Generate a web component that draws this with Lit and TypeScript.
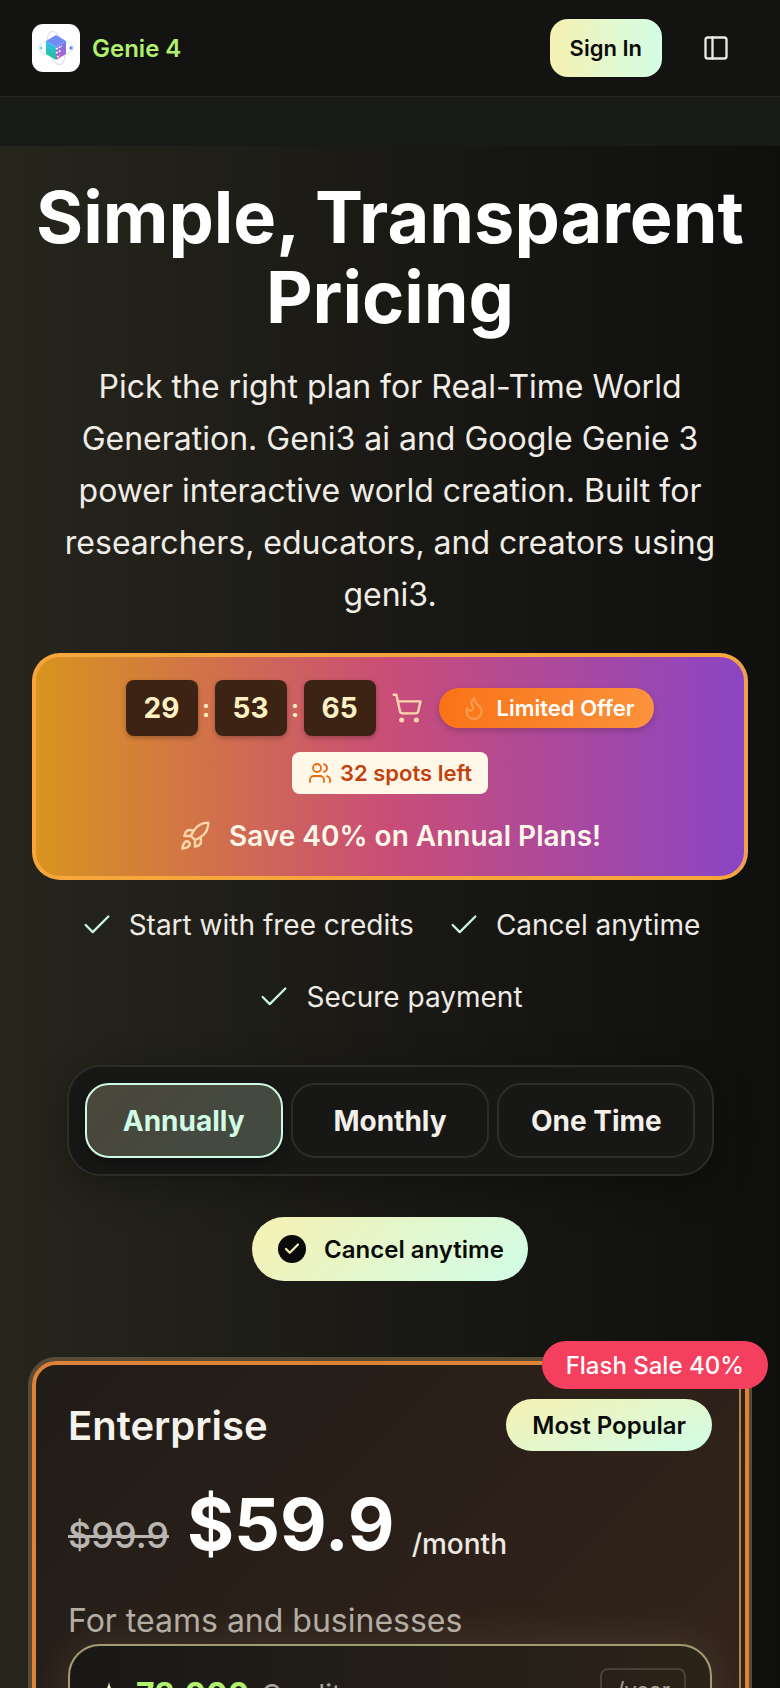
import { LitElement, css, html, svg } from 'lit';
import { customElement } from 'lit/decorators.js';

const stroked = (size: number, body: unknown, width = 2) => html`
  <svg width=${size} height=${size} viewBox="0 0 24 24" fill="none" stroke="currentColor"
    stroke-width=${width} stroke-linecap="round" stroke-linejoin="round">${body}</svg>
`;

const icons = {
  panel: svg`<rect x="3" y="3" width="18" height="18" rx="2"/><path d="M9 3v18"/>`,
  cart: svg`<circle cx="8" cy="21" r="1"/><circle cx="19" cy="21" r="1"/><path d="M2.05 2.05h2l2.66 12.42a2 2 0 0 0 2 1.58h9.78a2 2 0 0 0 1.95-1.57l1.65-7.43H5.12"/>`,
  flame: svg`<path d="M8.5 14.5A2.5 2.5 0 0 0 11 12c0-1.38-.5-2-1-3-1.072-2.143-.224-4.054 2-6 .5 2.5 2 4.9 4 6.5 2 1.6 3 3.5 3 5.5a7 7 0 1 1-14 0c0-1.153.433-2.294 1-3a2.5 2.5 0 0 0 2.5 2.5z"/>`,
  users: svg`<path d="M16 21v-2a4 4 0 0 0-4-4H6a4 4 0 0 0-4 4v2"/><circle cx="9" cy="7" r="4"/><path d="M22 21v-2a4 4 0 0 0-3-3.87"/><path d="M16 3.13a4 4 0 0 1 0 7.75"/>`,
  rocket: svg`<path d="M4.5 16.5c-1.5 1.26-2 5-2 5s3.74-.5 5-2c.71-.84.7-2.13-.09-2.91a2.18 2.18 0 0 0-2.91-.09z"/><path d="m12 15-3-3a22 22 0 0 1 2-3.95A12.88 12.88 0 0 1 22 2c0 2.72-.78 7.5-6 11a22.35 22.35 0 0 1-4 2z"/><path d="M9 12H4s.55-3.03 2-4c1.62-1.08 5 0 5 0"/><path d="M12 15v5s3.03-.55 4-2c1.08-1.62 0-5 0-5"/>`,
  check: svg`<path d="M20 6 9 17l-5-5"/>`,
};

const logo = html`
  <svg width="48" height="48" viewBox="0 0 48 48" fill="none">
    <defs>
      <linearGradient id="cubeL" x1="0" y1="0" x2="0" y2="1">
        <stop offset="0" stop-color="#38bdf8" /><stop offset="1" stop-color="#22c08a" />
      </linearGradient>
      <linearGradient id="cubeR" x1="0" y1="0" x2="0" y2="1">
        <stop offset="0" stop-color="#6d7ff0" /><stop offset="1" stop-color="#c05cc8" />
      </linearGradient>
    </defs>
    <ellipse cx="24" cy="24" rx="17" ry="8" stroke="#c9eef2" stroke-width="1" />
    <ellipse cx="24" cy="24" rx="8" ry="17" stroke="#dcdcfb" stroke-width="1" transform="rotate(-15 24 24)" />
    <path d="M24 11 34 17 24 23 14 17z" fill="#6f8df5" />
    <path d="M14 17 24 23V36L14 30z" fill="url(#cubeL)" />
    <path d="M34 17 24 23V36L34 30z" fill="url(#cubeR)" />
    <path d="M24 25l6-3M24 29l5-2.500M25 33l3-1.500" stroke="#fff" stroke-width="1.600" stroke-dasharray="2 1" />
    <circle cx="9" cy="24" r="1.500" fill="#7dd3e8" />
    <circle cx="39" cy="24" r="1.800" fill="#7c83f0" />
  </svg>
`;

@customElement('app-root')
export class AppRoot extends LitElement {
  static styles = css`
    :host {
      display: block;
      height: 1688px;
      overflow: hidden;
      font-family: Inter, 'Noto Sans', sans-serif;
      color: #f5f2ec;
      background: #111110;
    }

    svg {
      display: block;
      flex: none;
    }

    .top {
      display: flex;
      align-items: center;
      justify-content: space-between;
      height: 96px;
      padding: 0 50px 0 32px;
      box-sizing: content-box;
      background: #131312;
      border-bottom: 1px solid #272523;
    }

    .brand {
      display: flex;
      align-items: center;
      gap: 12px;
      font-size: 24px;
      font-weight: 600;
      color: #b1f06f;
    }

    .logo {
      width: 48px;
      height: 48px;
      background: #fff;
      border-radius: 11px;
    }

    .top-actions {
      display: flex;
      align-items: center;
      gap: 40px;
      color: #ece8e2;
    }

    .sign-in {
      display: flex;
      align-items: center;
      height: 58px;
      padding: 0 20px;
      border-radius: 18px;
      font-size: 22px;
      font-weight: 600;
      color: #0b0b0a;
      background: linear-gradient(90deg, #f5f1b2, #d3fde6);
    }

    .strip {
      height: 49px;
      background: #171a17;
    }

    main {
      background: linear-gradient(90deg, #26261d 0%, #1c1b16 40%, #0f0f0e 100%);
      padding: 31px 32px 0 32px;
      height: 1600px;
      box-sizing: border-box;
    }

    h1 {
      margin: 0;
      font-size: 72px;
      line-height: 80px;
      font-weight: 700;
      text-align: center;
      color: #fff;
    }

    .lead {
      margin: 24px 8px 0;
      font-size: 32px;
      line-height: 52px;
      text-align: center;
      color: #f0ece6;
    }

    .promo {
      display: flex;
      flex-direction: column;
      align-items: center;
      height: 227px;
      margin-top: 32px;
      padding-top: 23px;
      box-sizing: border-box;
      border: 4px solid;
      border-color: #f7a63c #ef9f52 #f7a63c #f7a63c;
      border-radius: 28px;
      background: linear-gradient(90deg, #d8941f 0%, #c94d78 50%, #8b45c4 100%);
    }

    .timer {
      display: flex;
      align-items: center;
      height: 56px;
    }

    .digit {
      display: grid;
      place-items: center;
      width: 72px;
      height: 56px;
      border-radius: 8px;
      background: #3d2314;
      box-shadow: 0 2px 5px rgb(0 0 0 / 25%);
      color: #fdf1c4;
      font-size: 28px;
      font-weight: 700;
    }

    .colon {
      width: 17px;
      text-align: center;
      color: #fdf1c4;
      font-size: 24px;
      font-weight: 700;
    }

    .cart {
      margin: 0 16px 0 15px;
      color: #fed7aa;
    }

    .limited {
      display: flex;
      align-items: center;
      gap: 10px;
      height: 40px;
      padding: 0 20px 0 22px;
      border-radius: 20px;
      font-size: 22px;
      font-weight: 600;
      color: #fff;
      background: linear-gradient(90deg, #f97316, #fb923c);
      box-shadow: 0 3px 6px rgb(0 0 0 / 18%);
    }

    .limited svg {
      color: #fd9a4c;
    }

    .spots {
      display: flex;
      align-items: center;
      gap: 8px;
      height: 42px;
      margin-top: 16px;
      padding: 0 16px;
      border-radius: 8px;
      background: #fff7e8;
      color: #c2410c;
      font-size: 22px;
      font-weight: 600;
    }

    .spots svg {
      color: #ea6a10;
    }

    .save {
      display: flex;
      align-items: center;
      gap: 18px;
      margin-top: 25px;
      font-size: 28px;
      line-height: 34px;
      font-weight: 600;
      color: #fff7e8;
    }

    .save svg {
      color: #fed7aa;
    }

    .perks {
      display: flex;
      flex-wrap: wrap;
      justify-content: center;
      gap: 0 33px;
      margin-top: 9px;
    }

    .perk {
      display: flex;
      align-items: center;
      gap: 15px;
      height: 72px;
      font-size: 28px;
      color: #eeeae4;
    }

    .perk svg {
      color: #c9f7e0;
    }

    .tabs {
      display: flex;
      gap: 8px;
      width: 647px;
      height: 111px;
      margin: 32px auto 0;
      padding: 16px;
      box-sizing: border-box;
      border: 2px solid #2e2c28;
      border-radius: 34px;
      background: #171716;
      box-shadow: 0 10px 40px rgb(0 0 0 / 30%);
    }

    .tab {
      display: grid;
      place-items: center;
      flex: 1 1 0;
      border: 2px solid #2e2c28;
      border-radius: 24px;
      font-size: 28px;
      font-weight: 700;
      color: #f3efe9;
    }

    .tab.on {
      border-color: #cdfbe3;
      color: #d0fbe4;
      background: linear-gradient(135deg, #4b463a, #414b42);
      box-shadow: 0 6px 14px rgb(0 0 0 / 30%);
    }

    .cancel {
      display: flex;
      align-items: center;
      gap: 18px;
      width: fit-content;
      height: 64px;
      margin: 41px auto 0;
      padding: 0 24px 0 26px;
      box-sizing: border-box;
      border-radius: 32px;
      font-size: 24px;
      font-weight: 600;
      color: #0b0b0a;
      background: linear-gradient(135deg, #f6f1b2, #d1fde7);
    }

    .tick {
      display: grid;
      place-items: center;
      width: 28px;
      height: 28px;
      border-radius: 50%;
      background: #0a0a0a;
      color: #f6f1b2;
    }

    .card {
      position: relative;
      width: 724px;
      height: 500px;
      margin: 76px 0 0 -4px;
      padding: 38px 36px 0;
      box-sizing: border-box;
      border: 4px solid #5a4b36;
      border-radius: 28px;
      background: linear-gradient(135deg, #201c18 0%, #2e2119 60%, #35261b 100%);
    }

    .card::before {
      content: '';
      position: absolute;
      inset: 0 -1px -1px 0;
      border: 4px solid #dc8339;
      border-radius: 24px;
      pointer-events: none;
    }

    .card::after {
      content: '';
      position: absolute;
      top: 0;
      bottom: 0;
      right: 7px;
      width: 2px;
      background: #b0844f;
    }

    .flash {
      position: absolute;
      z-index: 1;
      top: -20px;
      right: -20px;
      display: flex;
      align-items: center;
      height: 48px;
      padding: 0 24px;
      border-radius: 24px;
      background: #f43f5e;
      color: #fff;
      font-size: 24px;
      font-weight: 500;
    }

    .card-head {
      display: flex;
      align-items: center;
      justify-content: space-between;
      height: 52px;
    }

    .card-head h2 {
      margin: 0;
      font-size: 40px;
      font-weight: 600;
      color: #f5f2ec;
    }

    .popular {
      display: flex;
      align-items: center;
      height: 52px;
      padding: 0 26px;
      border-radius: 26px;
      font-size: 24px;
      font-weight: 600;
      color: #0b0b0a;
      background: linear-gradient(160deg, #f6f1b2, #d1fde7);
    }

    .price {
      display: flex;
      align-items: flex-end;
      margin-top: 29px;
      height: 88px;
    }

    .was {
      margin-bottom: 15px;
      font-size: 36px;
      line-height: 36px;
      font-weight: 500;
      color: #b9b5b0;
      text-decoration: line-through;
    }

    .now {
      margin: 0 17px 0 18px;
      font-size: 72px;
      line-height: 88px;
      font-weight: 700;
      color: #fff;
    }

    .per {
      margin-bottom: 10px;
      font-size: 28px;
      line-height: 28px;
      font-weight: 500;
      color: #ece8e2;
    }

    .blurb {
      margin: 33px 0 0;
      font-size: 32px;
      line-height: 40px;
      color: #b3ada3;
    }

    .credits {
      display: flex;
      align-items: flex-start;
      gap: 8px;
      height: 160px;
      margin-top: 3px;
      padding: 22px 24px 22px 26px;
      box-sizing: border-box;
      border: 2px solid #a39c70;
      border-radius: 32px;
      background: linear-gradient(90deg, #191817, #2c2318);
      box-shadow: 0 -4px 40px rgb(255 240 200 / 10%);
    }

    .star {
      margin: 13px 6px 0 0;
      color: #f3efc0;
    }

    .amount {
      margin-top: 5px;
      font-size: 32px;
      line-height: 44px;
      font-weight: 700;
      color: #b1f06f;
    }

    .unit {
      margin: 5px 0 0 4px;
      font-size: 28px;
      line-height: 44px;
      color: #a8a29e;
    }

    .year {
      margin-left: auto;
      padding: 0 14px;
      height: 40px;
      border: 2px solid #4a4238;
      border-radius: 8px;
      font-size: 22px;
      line-height: 40px;
      color: #a8a29e;
    }
  `;

  render() {
    return html`
      <header class="top">
        <div class="brand"><div class="logo">${logo}</div>Genie 4</div>
        <div class="top-actions">
          <div class="sign-in">Sign In</div>
          ${stroked(28, icons.panel)}
        </div>
      </header>
      <div class="strip"></div>
      <main>
        <h1>Simple, Transparent Pricing</h1>
        <p class="lead">
          Pick the right plan for Real-Time World Generation. Geni3 ai and Google Genie 3 power
          interactive world creation. Built for researchers, educators, and creators using geni3.
        </p>

        <section class="promo">
          <div class="timer">
            <div class="digit">29</div>
            <div class="colon">:</div>
            <div class="digit">53</div>
            <div class="colon">:</div>
            <div class="digit">65</div>
            <div class="cart">${stroked(32, icons.cart, 1.8)}</div>
            <div class="limited">${stroked(26, icons.flame)}Limited Offer</div>
          </div>
          <div class="spots">${stroked(24, icons.users, 1.8)}32 spots left</div>
          <div class="save">${stroked(32, icons.rocket, 1.8)}Save 40% on Annual Plans!</div>
        </section>

        <div class="perks">
          ${['Start with free credits', 'Cancel anytime', 'Secure payment'].map(
            (perk) => html`<div class="perk">${stroked(34, icons.check, 1.6)}${perk}</div>`,
          )}
        </div>

        <div class="tabs">
          <div class="tab on">Annually</div>
          <div class="tab">Monthly</div>
          <div class="tab">One Time</div>
        </div>

        <div class="cancel">
          <div class="tick">${stroked(18, icons.check, 3)}</div>
          Cancel anytime
        </div>

        <article class="card">
          <div class="flash">Flash Sale 40%</div>
          <div class="card-head">
            <h2>Enterprise</h2>
            <div class="popular">Most Popular</div>
          </div>
          <div class="price">
            <span class="was">$99.9</span>
            <span class="now">$59.9</span>
            <span class="per">/month</span>
          </div>
          <p class="blurb">For teams and businesses</p>
          <div class="credits">
            <svg class="star" width="26" height="26" viewBox="0 0 24 24" fill="currentColor">
              <path d="M12 1c1 6 4 10 10 11-6 1-9 5-10 11-1-6-4-10-10-11 6-1 9-5 10-11z" />
            </svg>
            <span class="amount">72,000</span>
            <span class="unit">Credits</span>
            <span class="year">/year</span>
          </div>
        </article>
      </main>
    `;
  }
}
